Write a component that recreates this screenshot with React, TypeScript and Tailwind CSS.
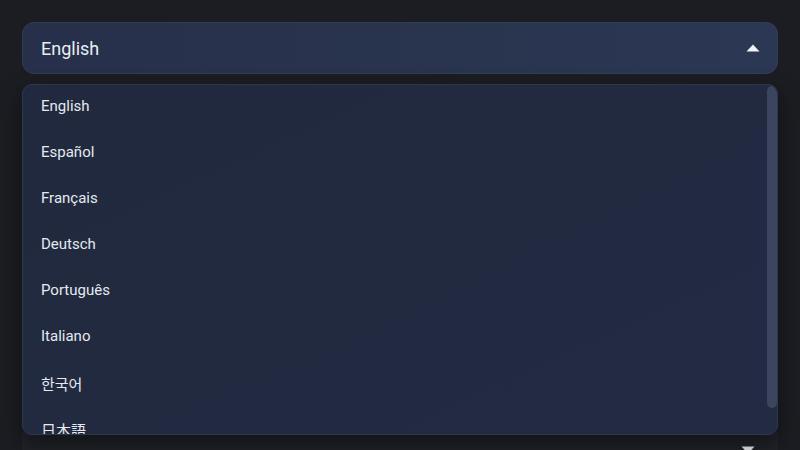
import React from "react"

const languages = [
  { label: "English" },
  { label: "Español" },
  { label: "Français" },
  { label: "Deutsch" },
  { label: "Português" },
  { label: "Italiano" },
  { label: "한국어", cjk: true },
  { label: "日本語", cjk: true },
]

function Caret({ up }: { up?: boolean }) {
  return (
    <svg width="14" height="8" viewBox="0 0 14 8" className={up ? "" : "rotate-180"}>
      <path d="M7 0.5 L13.5 7.5 L0.5 7.5 Z" fill="#f1f3f8" />
    </svg>
  )
}

export default function App() {
  return (
    <div
      className="w-[800px] h-[450px] overflow-hidden bg-[#1b1d22] px-[22px] pt-[22px] flex flex-col gap-[14px]"
      style={{ fontFamily: "Roboto, 'Noto Sans CJK KR', 'Noto Sans CJK JP', sans-serif" }}
    >
      <div className="relative">
        {/* trigger */}
        <button className="w-full h-[52px] rounded-[12px] border border-[#333d57] bg-gradient-to-r from-[#26304a] to-[#2c3753] flex items-center justify-between pl-[18px] pr-[17px]">
          <span className="text-[18px] text-[#e9ecf2]">English</span>
          <Caret up />
        </button>

        {/* menu */}
        <div className="absolute left-0 right-0 top-[62px] z-10 h-[351px] rounded-[10px] border border-[#2d3750] bg-gradient-to-br from-[#20293d] to-[#222b42] shadow-[0_10px_24px_rgba(0,0,0,0.45)] overflow-hidden">
          <ul className="h-full overflow-hidden pr-[12px]">
            {languages.map((lang) => (
              <li
                key={lang.label}
                className={
                  lang.cjk
                    ? "h-[46px] flex items-center pt-[2px] pl-[18px] text-[15px] text-[#e6e9f0]"
                    : "h-[46px] flex items-center pb-[4px] pl-[18px] text-[15px] text-[#e6e9f0]"
                }
              >
                {lang.label}
              </li>
            ))}
          </ul>
          {/* scrollbar thumb */}
          <div className="absolute right-0 top-[1px] w-[10px] h-[322px] rounded-[5px] bg-[#3b4560]" />
        </div>
      </div>

      {/* second field, behind the menu */}
      <div className="w-full h-[52px] mt-[336px] rounded-[12px] bg-[#202328] flex items-center justify-end pr-[23px] shrink-0">
        <Caret />
      </div>
    </div>
  )
}
